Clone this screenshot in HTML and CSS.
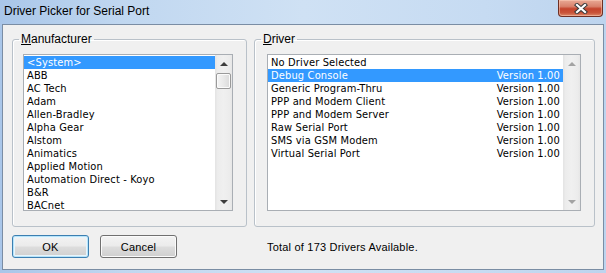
FILE: index.html
```html
<!DOCTYPE html>
<html>
<head>
<meta charset="utf-8">
<link rel="stylesheet" href="styles.css">
</head>
<body>
<div class="window">
  <div class="titlebar">
    <span class="title">Driver Picker for Serial Port</span>
    <div class="close">
      <svg width="14" height="11" viewBox="0 0 14 11">
        <path d="M3 2 L11 9 M11 2 L3 9" stroke="#3a3a3a" stroke-width="4.2" stroke-linecap="square" fill="none"/>
        <path d="M3 2 L11 9 M11 2 L3 9" stroke="#ffffff" stroke-width="2.2" stroke-linecap="square" fill="none"/>
      </svg>
    </div>
  </div>
  <div class="client">
    <div class="groups">
      <fieldset class="group group-mfr">
        <legend><u>M</u>anufacturer</legend>
        <div class="listbox lb-mfr">
          <ul class="items">
            <li class="sel">&lt;System&gt;</li>
            <li>ABB</li>
            <li>AC Tech</li>
            <li>Adam</li>
            <li>Allen-Bradley</li>
            <li>Alpha Gear</li>
            <li>Alstom</li>
            <li>Animatics</li>
            <li>Applied Motion</li>
            <li>Automation Direct - Koyo</li>
            <li>B&amp;R</li>
            <li>BACnet</li>
          </ul>
          <div class="vscroll">
            <span class="arrow up"></span>
            <span class="thumb"></span>
            <span class="track"></span>
            <span class="arrow down"></span>
          </div>
        </div>
      </fieldset>
      <fieldset class="group group-drv">
        <legend><u>D</u>river</legend>
        <div class="listbox lb-drv">
          <ul class="items">
            <li><span>No Driver Selected</span></li>
            <li class="sel"><span>Debug Console</span><span>Version 1.00</span></li>
            <li><span>Generic Program-Thru</span><span>Version 1.00</span></li>
            <li><span>PPP and Modem Client</span><span>Version 1.00</span></li>
            <li><span>PPP and Modem Server</span><span>Version 1.00</span></li>
            <li><span>Raw Serial Port</span><span>Version 1.00</span></li>
            <li><span>SMS via GSM Modem</span><span>Version 1.00</span></li>
            <li><span>Virtual Serial Port</span><span>Version 1.00</span></li>
          </ul>
          <div class="vscroll disabled">
            <span class="arrow up"></span>
            <span class="track"></span>
            <span class="arrow down"></span>
          </div>
        </div>
      </fieldset>
    </div>
    <div class="footer">
      <button class="btn btn-default">OK</button>
      <button class="btn">Cancel</button>
      <span class="status">Total of 173 Drivers Available.</span>
    </div>
  </div>
</div>
</body>
</html>
```
FILE: styles.css
```css
html, body {
  margin: 0;
  padding: 0;
}
body {
  width: 606px;
  height: 273px;
  overflow: hidden;
  background: #bcd4ee;
}
.window {
  display: flex;
  flex-direction: column;
  height: 273px;
  background: linear-gradient(90deg, #a9c6e9 0%, #c0d7f0 20%, #cfe1f4 50%, #c6dbf2 80%, #bdd4ee 100%);
}
.titlebar {
  height: 24px;
  display: flex;
  justify-content: space-between;
  align-items: flex-start;
  flex: none;
}
.title {
  font: 12px "Liberation Sans", Arial, sans-serif;
  line-height: 23px;
  padding-left: 4px;
  color: #000;
}
.close {
  width: 45px;
  height: 17px;
  margin-right: 3px;
  box-sizing: border-box;
  border: 1px solid #6e2f24;
  border-top: none;
  border-radius: 0 0 4px 4px;
  background: linear-gradient(#e9a995 0%, #d9826c 40%, #c4442c 55%, #c9543a 80%, #dc8a6a 100%);
  box-shadow: inset 0 0 0 1px rgba(255, 210, 190, 0.5);
  display: flex;
  align-items: center;
  justify-content: center;
}
.close svg {
  display: block;
}
.client {
  flex: 1;
  margin: 0 2px 3px 2px;
  border: 1px solid #7a8da4;
  background: #f0f0f0;
  display: flex;
  flex-direction: column;
}
.groups {
  display: flex;
  gap: 7px;
  padding: 7px 0 0 9px;
}
.group {
  margin: 0;
  padding: 0;
  min-width: 0;
  box-sizing: border-box;
  height: 195px;
  border: 1px solid #b9c1c9;
  border-radius: 3px;
  box-shadow: inset 1px 1px 0 #fff;
}
.group-mfr {
  width: 235px;
}
.group-drv {
  width: 341px;
}
.group legend {
  margin-left: 6px;
  padding: 0 2px;
  font: 12px "Liberation Sans", Arial, sans-serif;
  line-height: 14px;
  color: #000;
}
.listbox {
  display: flex;
  box-sizing: border-box;
  height: 157px;
  margin-top: 8px;
  border: 1px solid #a9aeb4;
  background: #fff;
  overflow: hidden;
}
.lb-mfr {
  width: 210px;
  margin-left: 10px;
}
.lb-drv {
  width: 314px;
  margin-left: 12px;
}
.items {
  flex: 1;
  list-style: none;
  margin: 0;
  padding: 1px 0 0 0;
  font: 11px "DejaVu Sans Condensed", "DejaVu Sans", sans-serif;
  letter-spacing: 0.15px;
  line-height: 13px;
  color: #000;
  min-width: 0;
}
.items li {
  height: 13px;
  padding: 0 3px;
  white-space: nowrap;
  overflow: hidden;
}
.lb-drv .items li {
  display: flex;
  justify-content: space-between;
}
.items li.sel {
  background: #3399ff;
  color: #fff;
}
.vscroll {
  width: 17px;
  flex: none;
  display: flex;
  flex-direction: column;
  background: linear-gradient(90deg, #e3e3e3 0%, #ececec 15%, #f0f0f0 50%, #ececec 85%, #e6e6e6 100%);
}
.arrow {
  height: 17px;
  flex: none;
  display: flex;
  align-items: center;
  justify-content: center;
}
.arrow::before {
  content: "";
  width: 0;
  height: 0;
  border-left: 4px solid transparent;
  border-right: 4px solid transparent;
}
.arrow.up::before {
  border-bottom: 4px solid #3d3d3d;
}
.arrow.down::before {
  border-top: 4px solid #3d3d3d;
}
.disabled .arrow.up::before {
  border-bottom-color: #a3a3a3;
}
.disabled .arrow.down::before {
  border-top-color: #a3a3a3;
}
.thumb {
  height: 16px;
  margin: 1px 1px 0 1px;
  box-sizing: border-box;
  border: 1px solid #9a9a9a;
  border-radius: 2px;
  background: linear-gradient(90deg, #f4f4f4 0%, #e9e9e9 50%, #dadada 100%);
  box-shadow: inset 0 0 0 1px #fbfbfb;
  flex: none;
}
.track {
  flex: 1;
}
.footer {
  display: flex;
  align-items: center;
  padding: 8px 0 0 9px;
}
.btn {
  width: 77px;
  height: 23px;
  box-sizing: border-box;
  margin: 0;
  padding: 0;
  border: 1px solid #707070;
  border-radius: 3px;
  background: linear-gradient(#f3f3f3 0%, #ebebeb 48%, #dddddd 52%, #cfcfcf 100%);
  box-shadow: inset 0 0 0 1px #fbfbfb;
  font: 11px "Liberation Sans", Arial, sans-serif;
  letter-spacing: 0.2px;
  color: #000;
}
.btn + .btn {
  margin-left: 11px;
}
.btn-default {
  border-color: #3c7fb1;
  box-shadow: inset 0 0 0 1px #b7e4fa, inset 0 0 0 2px #e8f5fc;
}
.status {
  margin-left: 90px;
  font: 11px "Liberation Sans", Arial, sans-serif;
  letter-spacing: 0.2px;
  color: #000;
}
```
